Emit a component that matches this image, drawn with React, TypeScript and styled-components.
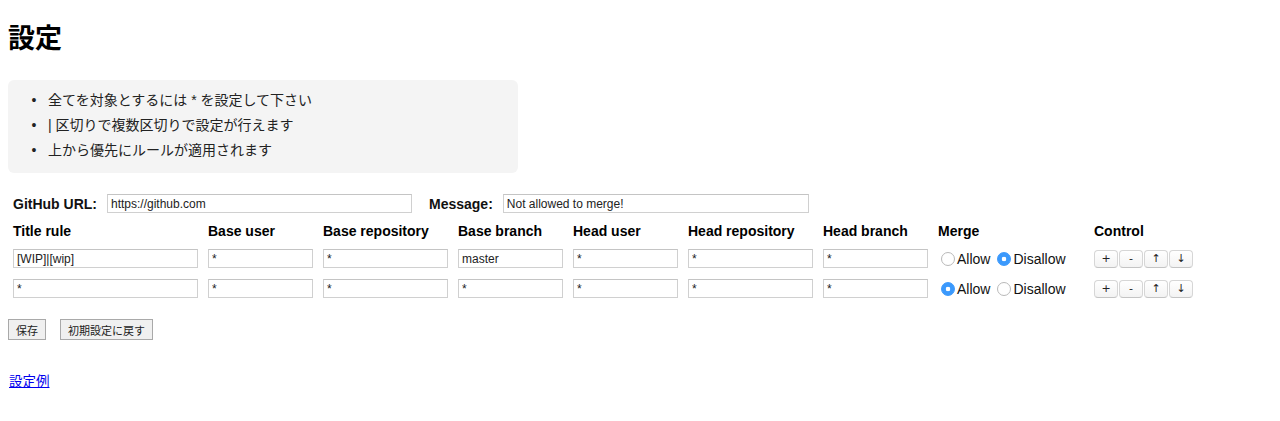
import React, { useState } from 'react';
import styled, { createGlobalStyle } from 'styled-components';

const GlobalStyle = createGlobalStyle`
  body {
    margin: 0;
    font-family: "Liberation Sans", "Noto Sans CJK JP", sans-serif;
    font-size: 14px;
    color: #111;
    background: #fff;
  }
`;

const Page = styled.div`
  padding: 8px;
`;

const Title = styled.h1`
  margin: 16px 0 26px;
  font-size: 27px;
  line-height: 30px;
  font-weight: bold;
  color: #000;
`;

const Notes = styled.div`
  width: 510px;
  padding: 8px 0 10px;
  background: #f4f4f4;
  border-radius: 6px;

  ul {
    margin: 0;
    padding-left: 40px;
  }

  li {
    line-height: 25px;
    color: #222;
  }

  li::marker {
    content: "•\\00a0\\00a0\\00a0";
  }
`;

const UrlRow = styled.div`
  display: flex;
  align-items: center;
  height: 19px;
  margin-top: 21px;
  padding-left: 5px;
`;

const FieldLabel = styled.label<{ $gapLeft?: number }>`
  font-weight: bold;
  margin-left: ${({ $gapLeft }) => $gapLeft ?? 0}px;
  margin-right: 10px;
`;

const TextInput = styled.input<{ $width: number }>`
  box-sizing: border-box;
  width: ${({ $width }) => $width}px;
  height: 19px;
  margin: 0;
  padding: 0 3px;
  border: 1px solid #d0d0d0;
  border-top-color: #c4c4c4;
  font-family: "Liberation Sans", "Noto Sans CJK JP", sans-serif;
  font-size: 12px;
  color: #222;
  background: #fff;
  outline: none;
`;

const Grid = styled.div<{ $top: number }>`
  display: grid;
  grid-template-columns: 185px 105px 125px 105px 105px 125px 105px 146px auto;
  column-gap: 10px;
  align-items: center;
  padding-left: 5px;
  margin-top: ${({ $top }) => $top}px;
`;

const Head = styled.div`
  font-weight: bold;
  line-height: 20px;
  color: #000;
`;

const MergeCell = styled.div`
  display: flex;
  align-items: center;
  height: 19px;
`;

const RadioLabel = styled.label`
  display: flex;
  align-items: center;
  margin-right: 4px;
  color: #111;
`;

const Radio = styled.input`
  appearance: none;
  box-sizing: border-box;
  width: 14px;
  height: 14px;
  margin: 0 2px 0 3px;
  border: 1px solid #b9b9b9;
  border-radius: 50%;
  background: #fff;

  &:checked {
    border-color: #3b99fc;
    background: radial-gradient(circle, #fff 0 2px, #3b99fc 2.6px);
  }
`;

const Controls = styled.div`
  display: flex;
  gap: 1px;
`;

const SmallButton = styled.button`
  box-sizing: border-box;
  width: 24px;
  height: 18px;
  padding: 0;
  border: 1px solid #d6d6d6;
  border-bottom-color: #c4c4c4;
  border-radius: 4px;
  background: linear-gradient(#ffffff, #f3f3f3);
  font-family: "DejaVu Sans", sans-serif;
  font-size: 11px;
  line-height: 16px;
  color: #222;
`;

const Actions = styled.div`
  display: flex;
  gap: 14px;
  margin-top: 21px;
`;

const ActionButton = styled.button`
  box-sizing: border-box;
  height: 21px;
  padding: 0 7px;
  border: 1px solid #a9a9a9;
  background: #f0f0f0;
  font-family: "Noto Sans CJK JP", sans-serif;
  font-size: 11px;
  color: #222;
`;

const ExampleLink = styled.a`
  display: inline-block;
  margin-top: 33px;
  margin-left: 1px;
  font-size: 13.5px;
  line-height: 17px;
  color: #0000ee;
  text-decoration: underline;
`;

type Rule = {
  title: string;
  baseUser: string;
  baseRepo: string;
  baseBranch: string;
  headUser: string;
  headRepo: string;
  headBranch: string;
  allow: boolean;
};

const initialRules: Rule[] = [
  { title: '[WIP]|[wip]', baseUser: '*', baseRepo: '*', baseBranch: 'master', headUser: '*', headRepo: '*', headBranch: '*', allow: false },
  { title: '*', baseUser: '*', baseRepo: '*', baseBranch: '*', headUser: '*', headRepo: '*', headBranch: '*', allow: true },
];

const headers = ['Title rule', 'Base user', 'Base repository', 'Base branch', 'Head user', 'Head repository', 'Head branch', 'Merge', 'Control'];

function RuleRow({ rule, index, onToggle }: { rule: Rule; index: number; onToggle: (allow: boolean) => void }) {
  return (
    <Grid $top={index === 0 ? 8 : 11}>
      <TextInput $width={185} defaultValue={rule.title} />
      <TextInput $width={105} defaultValue={rule.baseUser} />
      <TextInput $width={125} defaultValue={rule.baseRepo} />
      <TextInput $width={105} defaultValue={rule.baseBranch} />
      <TextInput $width={105} defaultValue={rule.headUser} />
      <TextInput $width={125} defaultValue={rule.headRepo} />
      <TextInput $width={105} defaultValue={rule.headBranch} />
      <MergeCell>
        <RadioLabel>
          <Radio type="radio" name={`merge-${index}`} checked={rule.allow} onChange={() => onToggle(true)} />
          Allow
        </RadioLabel>
        <RadioLabel>
          <Radio type="radio" name={`merge-${index}`} checked={!rule.allow} onChange={() => onToggle(false)} />
          Disallow
        </RadioLabel>
      </MergeCell>
      <Controls>
        <SmallButton>+</SmallButton>
        <SmallButton>-</SmallButton>
        <SmallButton>↑</SmallButton>
        <SmallButton>↓</SmallButton>
      </Controls>
    </Grid>
  );
}

export default function App() {
  const [rules, setRules] = useState(initialRules);

  const toggle = (i: number, allow: boolean) =>
    setRules((rs) => rs.map((r, j) => (j === i ? { ...r, allow } : r)));

  return (
    <Page>
      <GlobalStyle />
      <Title>設定</Title>
      <Notes>
        <ul>
          <li>全てを対象とするには * を設定して下さい</li>
          <li>| 区切りで複数区切りで設定が行えます</li>
          <li>上から優先にルールが適用されます</li>
        </ul>
      </Notes>

      <UrlRow>
        <FieldLabel>GitHub URL:</FieldLabel>
        <TextInput $width={305} defaultValue="https://github.com" />
        <FieldLabel $gapLeft={17}>Message:</FieldLabel>
        <TextInput $width={306} defaultValue="Not allowed to merge!" />
      </UrlRow>

      <Grid $top={8}>
        {headers.map((h) => (
          <Head key={h}>{h}</Head>
        ))}
      </Grid>

      {rules.map((rule, i) => (
        <RuleRow key={i} rule={rule} index={i} onToggle={(allow) => toggle(i, allow)} />
      ))}

      <Actions>
        <ActionButton>保存</ActionButton>
        <ActionButton>初期設定に戻す</ActionButton>
      </Actions>

      <ExampleLink href="#">設定例</ExampleLink>
    </Page>
  );
}
